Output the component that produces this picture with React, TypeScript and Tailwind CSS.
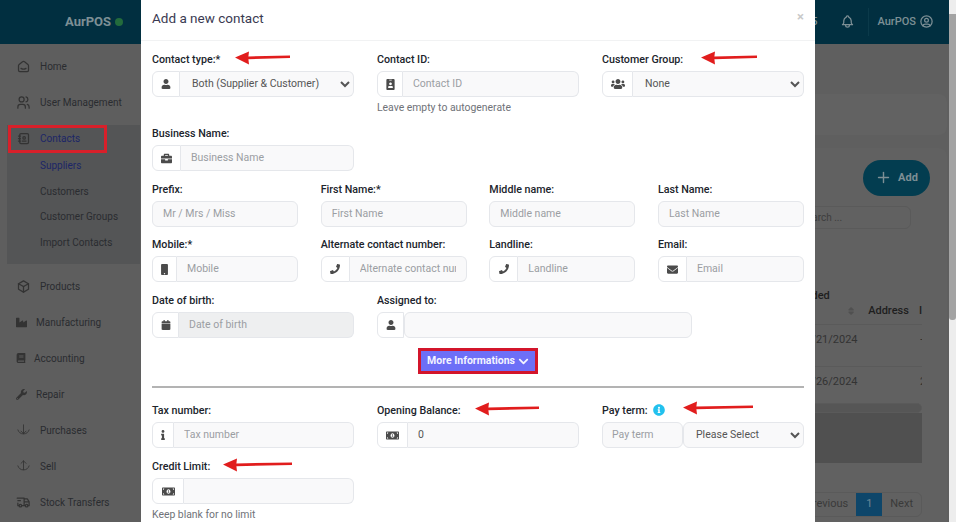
import type { ReactNode } from "react"
import {
  FaBook,
  FaBriefcase,
  FaCalendar,
  FaChevronDown,
  FaEnvelope,
  FaIdBadge,
  FaIndustry,
  FaInfo,
  FaInfoCircle,
  FaMobile,
  FaMoneyBillAlt,
  FaPhone,
  FaSort,
  FaUser,
  FaUsers,
  FaWrench,
} from "react-icons/fa"
import {
  TbAddressBook,
  TbBell,
  TbBox,
  TbPlus,
  TbSmartHome,
  TbTruckDelivery,
  TbUserCircle,
  TbUsers,
} from "react-icons/tb"

const FONT = "font-['Roboto',sans-serif]"
const FIELD_BG = "bg-[#f9f9fa]"

function Label({ children }: { children: ReactNode }) {
  return <label className="block h-[12px] text-[10.7px] leading-[14px] font-medium text-[#20242c]">{children}</label>
}

function Addon({ width, children }: { width: string; children: ReactNode }) {
  return (
    <span className={`flex h-full shrink-0 items-center justify-center rounded-l-[6px] border border-[#e5e7eb] bg-white text-[11px] text-[#4b4b4b] ${width}`}>
      {children}
    </span>
  )
}

function TextField({ placeholder, addon, addonWidth = "w-[29px]", disabled, value }: {
  placeholder?: string
  addon?: ReactNode
  addonWidth?: string
  disabled?: boolean
  value?: string
}) {
  return (
    <div className="mt-[6px] flex h-[26px]">
      {addon ? <Addon width={addonWidth}>{addon}</Addon> : null}
      <input
        readOnly
        placeholder={placeholder}
        defaultValue={value}
        className={`h-full w-full min-w-0 border border-[#e5e7eb] px-[10px] pb-[2px] text-[10.5px] text-[#555] outline-none placeholder:text-[#9b9ea3] ${
          addon ? "rounded-r-[6px] border-l-0" : "rounded-[6px]"
        } ${disabled ? "bg-[#eeeff0]" : FIELD_BG}`}
      />
    </div>
  )
}

function SelectField({ addon, value, addonWidth = "w-[31px]" }: { addon: ReactNode; value: string; addonWidth?: string }) {
  return (
    <div className="mt-[6px] flex h-[26px]">
      <Addon width={addonWidth}>{addon}</Addon>
      <select
        defaultValue={value}
        className={`h-full w-full min-w-0 rounded-r-[6px] border border-l-0 border-[#e5e7eb] px-[8px] pb-[2px] text-[10.5px] text-[#555] outline-none ${FIELD_BG}`}
      >
        <option>{value}</option>
      </select>
    </div>
  )
}

function Arrow({ className, width = 58 }: { className: string; width?: number }) {
  return (
    <svg className={`absolute ${className}`} width={width} height="16" viewBox={`0 0 ${width} 16`}>
      <path d={`M1 7.6 15 1.6 14.4 6.4 ${width - 1} 5.4 ${width - 1} 8 14.4 9.2 15 14.6Z`} fill="#e11d1d" />
    </svg>
  )
}

function DownCircle() {
  return (
    <svg width="15" height="15" viewBox="0 0 24 24" fill="none" stroke="currentColor" strokeWidth="1.4" strokeLinecap="round" strokeLinejoin="round">
      <path d="M12 3v14M8 13l4 4 4-4M3 11a9.5 9.5 0 0 0 18 0" />
    </svg>
  )
}

function UpCircle() {
  return (
    <svg width="15" height="15" viewBox="0 0 24 24" fill="none" stroke="currentColor" strokeWidth="1.4" strokeLinecap="round" strokeLinejoin="round">
      <path d="M12 17V3M8 7l4-4 4 4M3 11a9.5 9.5 0 0 0 18 0" />
    </svg>
  )
}

function NavItem({ icon, label, active, gap = "w-[40px]" }: { icon: ReactNode; label: string; active?: boolean; gap?: string }) {
  return (
    <div className={`flex h-[36px] items-center text-[10px] ${active ? "text-[#1c2667]" : "text-[#2a2c30]"}`}>
      <span className={`flex shrink-0 items-center pl-[16px] text-[#333] ${gap}`}>{icon}</span>
      <span>{label}</span>
    </div>
  )
}

function Sidebar() {
  return (
    <aside className="flex w-[140px] shrink-0 flex-col bg-[#5e5e5e]">
      <div className="flex h-[44px] items-center bg-[#012f40] pl-[65px] text-[13px] font-bold text-[#7d8f95]">
        AurPOS
        <span className="ml-[4px] h-[8px] w-[8px] rounded-full bg-[#236b3c]" />
      </div>
      <div className="mt-[4px]">
        <NavItem icon={<TbSmartHome size={15} />} label="Home" />
        <NavItem icon={<TbUsers size={15} />} label="User Management" />
      </div>
      <div className="mt-[5px] ml-[7px] h-[139px] bg-[#545556]">
        <div className="-mt-[5px] -ml-[7px]">
          <NavItem icon={<TbAddressBook size={15} />} label="Contacts" active />
        </div>
        <div className="-mt-[3px] pl-[33px] text-[10px] text-[#2a2c30]">
          <div className="flex h-[25.5px] items-center text-[#1c2667]">Suppliers</div>
          <div className="flex h-[25.5px] items-center">Customers</div>
          <div className="flex h-[25.5px] items-center">Customer Groups</div>
          <div className="flex h-[25.5px] items-center">Import Contacts</div>
        </div>
      </div>
      <div className="mt-[4px]">
        <NavItem icon={<TbBox size={15} />} label="Products" />
        <NavItem icon={<FaIndustry size={11} />} label="Manufacturing" gap="w-[36px]" />
        <NavItem icon={<FaBook size={10} />} label="Accounting" gap="w-[34px]" />
        <NavItem icon={<FaWrench size={11} />} label="Repair" gap="w-[36px]" />
        <NavItem icon={<DownCircle />} label="Purchases" />
        <NavItem icon={<UpCircle />} label="Sell" />
        <NavItem icon={<TbTruckDelivery size={15} />} label="Stock Transfers" />
      </div>
    </aside>
  )
}

function Backdrop() {
  return (
    <main className="flex min-w-0 flex-1 flex-col items-end bg-[#5f5f5f]">
      <header className="flex h-[44px] w-full items-center justify-end bg-[#012f40] text-[11px] font-medium text-[#7d8f95]">
        <span className="mr-[22px]">5</span>
        <TbBell size={15} className="mr-[13px]" />
        <span className="border-l border-[#0b3a4a] py-[6px] pl-[9px]">AurPOS</span>
        <TbUserCircle size={15} className="ml-[3px] mr-[15px]" />
      </header>
      <div className="mt-[50px] mr-[2px] h-[41px] w-[300px] rounded-[8px] bg-[#626262]" />
      <section className="mt-[13px] mr-[2px] flex h-[375px] w-[300px] flex-col items-end rounded-t-[8px] bg-[#616161] pr-[25px]">
        <button className="mt-[12px] -mr-[8px] flex h-[36px] w-[67px] items-center justify-center gap-[6px] rounded-full bg-[#033d50] text-[11px] font-bold text-[#7d8f95]">
          <TbPlus size={17} />
          Add
        </button>
        <div className="mt-[10px] mr-[11px] flex h-[23px] w-[120px] items-center rounded-[6px] border border-[#5a5a5a] pl-[9px] text-[10px] text-[#3d3d3d]">
          Search ...
        </div>
        <div className="mt-[59px] h-[14px] w-[107px] text-[11px] font-medium text-[#1e1e1e]">
          <span className="-ml-[17px] block">Added</span>
        </div>
        <div className="flex h-[23px] w-[107px] items-start border-b border-[#5a5a5a] pt-[1px] text-[11px] font-medium text-[#1e1e1e]">
          <FaSort size={10} className="mt-[3px] ml-[33px] text-[#505050]" />
          <span className="ml-[14px]">Address</span>
          <span className="ml-[10px]">I</span>
        </div>
        <div className="flex h-[42px] w-[275px] justify-end border-b border-[#5a5a5a] pt-[7px] text-[11px] text-[#333]">
          <span className="w-[128px] pl-[7px]">03/21/2024</span>
          <span className="w-[2px] overflow-hidden">+</span>
        </div>
        <div className="flex h-[36px] w-[275px] justify-end pt-[7px] text-[11px] text-[#333]">
          <span className="w-[128px] pl-[7px]">03/26/2024</span>
          <span className="w-[2px] overflow-hidden">2</span>
        </div>
        <div className="h-[10px] w-[275px] rounded-full border border-[#5a5a5a] bg-[#565656]" />
        <div className="h-[50px] w-[275px] bg-[#505050]" />
        <div className="mt-[29px] flex h-[25px] items-center rounded-[6px] border border-[#5a5a5a] text-[11px] text-[#3a3a3a]">
          <span className="px-[8px]">Previous</span>
          <span className="flex h-full w-[26px] items-center justify-center bg-[#0e466a] text-[#6d8696]">1</span>
          <span className="px-[8px]">Next</span>
        </div>
      </section>
    </main>
  )
}

function ContactModal() {
  return (
    <div className="absolute top-0 left-[141px] h-[522px] w-[674px] overflow-hidden bg-white">
      <div className="flex h-[41px] items-center justify-between border-b border-[#f1f2f3] px-[11px]">
        <h2 className="-mt-[4px] text-[13.5px] text-[#3a3a52]">Add a new contact</h2>
        <span className="-mt-[6px] text-[13px] font-bold text-[#c9c9c9]">×</span>
      </div>
      <div className="px-[11px] pt-[12px]">
        <div className="grid grid-cols-[202px_202px_202px] gap-x-[23px]">
          <div>
            <Label>Contact type:*</Label>
            <SelectField addon={<FaUser size={10} />} value="Both (Supplier & Customer)" addonWidth="w-[28px]" />
          </div>
          <div>
            <Label>Contact ID:</Label>
            <TextField placeholder="Contact ID" addon={<FaIdBadge size={11} />} addonWidth="w-[26px]" />
            <p className="mt-[4px] text-[10.4px] leading-[13px] text-[#6f7278]">Leave empty to autogenerate</p>
          </div>
          <div>
            <Label>Customer Group:</Label>
            <SelectField addon={<FaUsers size={14} />} value="None" />
          </div>
        </div>
        <div className="mt-[13px] w-[202px]">
          <Label>Business Name:</Label>
          <TextField placeholder="Business Name" addon={<FaBriefcase size={11} />} />
        </div>
        <div className="mt-[12px] grid grid-cols-4 gap-x-[22.6px] gap-y-[11px]">
          <div>
            <Label>Prefix:</Label>
            <TextField placeholder="Mr / Mrs / Miss" />
          </div>
          <div>
            <Label>First Name:*</Label>
            <TextField placeholder="First Name" />
          </div>
          <div>
            <Label>Middle name:</Label>
            <TextField placeholder="Middle name" />
          </div>
          <div>
            <Label>Last Name:</Label>
            <TextField placeholder="Last Name" />
          </div>
          <div>
            <Label>Mobile:*</Label>
            <TextField placeholder="Mobile" addon={<FaMobile size={11} />} addonWidth="w-[25px]" />
          </div>
          <div>
            <Label>Alternate contact number:</Label>
            <TextField placeholder="Alternate contact number" addon={<FaPhone size={10} />} />
          </div>
          <div>
            <Label>Landline:</Label>
            <TextField placeholder="Landline" addon={<FaPhone size={10} />} />
          </div>
          <div>
            <Label>Email:</Label>
            <TextField placeholder="Email" addon={<FaEnvelope size={11} />} />
          </div>
        </div>
        <div className="mt-[12px] flex gap-x-[23px]">
          <div className="w-[202px]">
            <Label>Date of birth:</Label>
            <TextField placeholder="Date of birth" addon={<FaCalendar size={10} />} addonWidth="w-[27px]" disabled />
          </div>
          <div className="w-[315px]">
            <Label>Assigned to:</Label>
            <div className="mt-[6px] flex h-[26px]">
              <Addon width="w-[27px]"><FaUser size={10} /></Addon>
              <input readOnly className={`h-full w-full rounded-[6px] border border-[#e5e7eb] ${FIELD_BG}`} />
            </div>
          </div>
        </div>
        <div className="mt-[10px] flex justify-center">
          <button className="flex h-[26px] w-[120px] items-center justify-center gap-[3px] border-[3px] border-[#d3152b] bg-[#6d6ff7] text-[10.5px] font-bold text-[#f4f4ff]">
            More Informations
            <FaChevronDown size={11} />
          </button>
        </div>
        <hr className="mt-[12px] border-t-2 border-[#b3b3b3]" />
        <div className="mt-[16px] grid grid-cols-[202px_202px_202px] gap-x-[23px]">
          <div>
            <Label>Tax number:</Label>
            <TextField placeholder="Tax number" addon={<FaInfo size={10} />} addonWidth="w-[22px]" />
          </div>
          <div>
            <Label>Opening Balance:</Label>
            <TextField value="0" addon={<FaMoneyBillAlt size={13} />} addonWidth="w-[31px]" />
          </div>
          <div>
            <div className="flex items-center gap-[5px]">
              <Label>Pay term:</Label>
              <FaInfoCircle size={12} className="text-[#22c1ee]" />
            </div>
            <div className="mt-[6px] flex h-[26px]">
              <input
                readOnly
                placeholder="Pay term"
                className={`h-full w-[81px] shrink-0 rounded-[6px] border border-[#e5e7eb] px-[9px] pb-[2px] text-[10.5px] outline-none placeholder:text-[#9b9ea3] ${FIELD_BG}`}
              />
              <select className={`h-full w-full min-w-0 rounded-[6px] border border-[#e5e7eb] px-[8px] pb-[2px] text-[10.5px] text-[#555] outline-none ${FIELD_BG}`}>
                <option>Please Select</option>
              </select>
            </div>
          </div>
        </div>
        <div className="mt-[12px] w-[202px]">
          <Label>Credit Limit:</Label>
          <TextField addon={<FaMoneyBillAlt size={13} />} addonWidth="w-[32px]" />
          <p className="mt-[4px] text-[10.4px] leading-[13px] text-[#6f7278]">Keep blank for no limit</p>
        </div>
      </div>

      {/* red annotations drawn on top of the form */}
      <Arrow className="top-[50px] left-[93px]" width={57} />
      <Arrow className="top-[50px] left-[559px]" />
      <Arrow className="top-[401px] left-[333px]" width={66} />
      <Arrow className="top-[400px] left-[541px]" width={72} />
      <Arrow className="top-[457px] left-[81px]" width={71} />
    </div>
  )
}

export default function App() {
  return (
    <div className={`relative flex h-[522px] w-[956px] overflow-hidden ${FONT}`}>
      <Sidebar />
      <Backdrop />
      <div className="flex w-[7px] shrink-0 flex-col bg-[#ededed]">
        <div className="mt-[14px] h-[306px] rounded-b-[3px] bg-[#a3a3a3]" />
      </div>
      <div className="absolute top-[125px] left-[8px] h-[28px] w-[99px] border-[3px] border-[#d8202a]" />
      <ContactModal />
    </div>
  )
}
